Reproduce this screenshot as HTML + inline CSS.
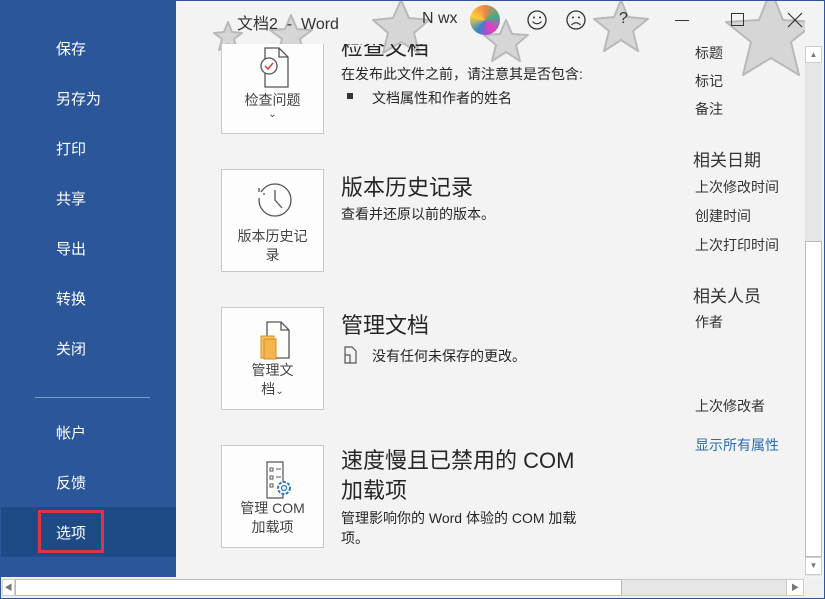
<!DOCTYPE html>
<html><head><meta charset="utf-8"><style>
*{margin:0;padding:0;box-sizing:border-box}
body{width:825px;height:599px;overflow:hidden;background:#f3f3f3;font-family:"Liberation Sans","Noto Sans CJK SC",sans-serif;position:relative;color:#262626}
.side{position:absolute;left:0;top:0;width:176px;height:577px;background:#2b579a}
.side div{position:absolute;left:56px;color:#fff;font-size:15px}
.sel{position:absolute;left:0;top:507px;width:176px;height:50px;background:#1e4a85}
.red{position:absolute;left:38px;top:510px;width:66px;height:43px;border:3px solid #e0353e}
.sep{position:absolute;left:35px;top:397px;width:115px;height:1px;background:#7b9ac6}
.abs{position:absolute}
.box{position:absolute;left:221px;width:103px;background:#fdfdfd;border:1px solid #c8c8c8;text-align:center;font-size:14px;color:#444;line-height:19px}
.h{position:absolute;font-size:22px;color:#262626}
.t{position:absolute;font-size:14px;color:#262626}
.r{position:absolute;left:695px;font-size:14px;color:#333}
.rh{position:absolute;left:693px;font-size:17px;color:#333}
</style></head><body>
<div class="side">
<div style="top:38px">保存</div>
<div style="top:88px">另存为</div>
<div style="top:138px">打印</div>
<div style="top:188px">共享</div>
<div style="top:238px">导出</div>
<div style="top:288px">转换</div>
<div style="top:338px">关闭</div>
<div class="sep" style="left:35px;top:397px"></div>
<div style="top:422px">帐户</div>
<div style="top:472px">反馈</div>
</div>
<div class="sel"></div><div class="red"></div>
<div class="abs" style="left:56px;top:522px;color:#fff;font-size:15px">选项</div>

<!-- title bar stars -->
<svg class="abs" style="left:176px;top:0" width="629" height="90">
<g fill="#d6d6d6" stroke="#b9b9b9" stroke-width="2" stroke-linejoin="round">
<polygon points="52,22 56,32 66,33 58,39 61,50 52,44 43,50 46,39 38,33 48,32"/>
<polygon points="115,15 121,29 136,30 124,39 128,54 115,46 102,54 106,39 94,30 109,29"/>
<polygon points="225,0 233,18 253,20 238,33 243,53 225,42 207,53 212,33 197,20 217,18"/>
<polygon points="330,20 336,34 352,35 340,45 344,61 330,52 316,61 320,45 308,35 324,34"/>
<polygon points="445,0 452,17 472,19 457,31 462,51 445,40 428,51 433,31 418,19 438,17"/>
<polygon points="595,-10 607,20 640,22 615,42 623,75 595,58 567,75 575,42 550,22 583,20"/>
</g></svg>
<div class="abs" style="left:237px;top:10px;font-size:16px;color:#333">文档2 &nbsp;- &nbsp;Word</div>
<div class="abs" style="left:422px;top:10px;font-size:16px;color:#333">N wx</div>
<div class="abs" style="left:470px;top:5px;width:30px;height:30px;border-radius:50%;background:conic-gradient(#e84,#4a8,#e3c,#38c,#fc3,#e84)"></div>
<svg class="abs" style="left:526px;top:9px" width="22" height="22"><circle cx="11" cy="11" r="9" fill="none" stroke="#333" stroke-width="1.3"/><circle cx="8" cy="8.5" r="1" fill="#333"/><circle cx="14" cy="8.5" r="1" fill="#333"/><path d="M6.5 12.5q4.5 4.5 9 0" fill="none" stroke="#333" stroke-width="1.2"/></svg>
<svg class="abs" style="left:565px;top:9px" width="22" height="22"><circle cx="11" cy="11" r="9" fill="none" stroke="#333" stroke-width="1.3"/><circle cx="8" cy="8.5" r="1" fill="#333"/><circle cx="14" cy="8.5" r="1" fill="#333"/><path d="M6.5 16q4.5 -4.5 9 0" fill="none" stroke="#333" stroke-width="1.2"/></svg>
<div class="abs" style="left:619px;top:10px;font-size:16px;color:#333">?</div>
<div class="abs" style="left:675px;top:20px;width:14px;height:1px;background:#333"></div>
<div class="abs" style="left:731px;top:13px;width:13px;height:13px;border:1px solid #333"></div>
<svg class="abs" style="left:787px;top:12px" width="16" height="16"><path d="M1 1L15 15M15 1L1 15" stroke="#333" stroke-width="1.2"/></svg>

<!-- content -->
<div class="box" style="top:44px;height:90px;border-top:none">
<svg width="40" height="46" style="margin-top:2px"><path d="M12 2h14l9 9v30H12z M26 2v9h9" fill="none" stroke="#555" stroke-width="1.3"/><circle cx="16" cy="20" r="8" fill="#fff" stroke="#555" stroke-width="1.3"/><path d="M12 20l3 3 5-6" fill="none" stroke="#d2353e" stroke-width="1.5"/></svg>
<div style="margin-top:-6px">检查问题</div><div style="font-size:10px;line-height:10px">⌄</div></div>
<div class="h" style="left:341px;top:30px;clip-path:inset(14px 0 0 0)">检查文档</div>
<div class="t" style="left:341px;top:64px">在发布此文件之前，请注意其是否包含:</div>
<div class="abs" style="left:347px;top:93px;width:6px;height:6px;background:#333"></div>
<div class="t" style="left:372px;top:88px">文档属性和作者的姓名</div>

<div class="box" style="top:169px;height:103px">
<svg width="44" height="44" style="margin-top:8px"><circle cx="24" cy="22" r="16" fill="none" stroke="#555" stroke-width="1.3"/><path d="M24 12v10l7 8" fill="none" stroke="#555" stroke-width="1.3"/><path d="M8 10v6h6" fill="none" stroke="#555" stroke-width="1.3"/><rect x="6" y="14" width="6" height="6" fill="#fdfdfd"/></svg>
<div>版本历史记<br>录</div></div>
<div class="h" style="left:341px;top:170px">版本历史记录</div>
<div class="t" style="left:341px;top:204px">查看并还原以前的版本。</div>

<div class="box" style="top:307px;height:103px">
<svg width="40" height="44" style="margin-top:10px"><path d="M14 4h14l8 8v28H14z M28 4v8h8" fill="none" stroke="#555" stroke-width="1.3"/><rect x="8" y="18" width="13" height="22" fill="#f5c46a" stroke="#e08a1a"/><rect x="11" y="21" width="12" height="20" fill="#f3b54e" stroke="#e08a1a"/></svg>
<div style="margin-top:-6px">管理文<br>档<span style="font-size:10px">⌄</span></div></div>
<div class="h" style="left:341px;top:308px">管理文档</div>
<svg class="abs" style="left:341px;top:345px" width="18" height="20"><path d="M4 2h7l4 4v12H4z M4 10h5v8" fill="none" stroke="#555" stroke-width="1.2"/></svg>
<div class="t" style="left:372px;top:346px">没有任何未保存的更改。</div>

<div class="box" style="top:445px;height:103px">
<svg width="44" height="44" style="margin-top:12px"><path d="M16 4h16v36H16z" fill="none" stroke="#555" stroke-width="1.2"/><path d="M19 10h3v3h-3zM19 18h3v3h-3zM19 26h3v3h-3zM25 11h5M25 19h5" fill="none" stroke="#555"/><circle cx="33" cy="30" r="6" fill="#fff" stroke="#2a78c8" stroke-width="2" stroke-dasharray="3 1.5"/><circle cx="33" cy="30" r="2.5" fill="none" stroke="#2a78c8" stroke-width="1.3"/></svg>
<div style="margin-top:-8px">管理 COM<br>加载项</div></div>
<div class="h" style="left:341px;top:446px;line-height:30px">速度慢且已禁用的 COM<br>加载项</div>
<div class="t" style="left:341px;top:508px;line-height:20px">管理影响你的 Word 体验的 COM 加载<br>项。</div>

<div class="r" style="top:43px">标题</div>
<div class="r" style="top:71px">标记</div>
<div class="r" style="top:99px">备注</div>
<div class="rh" style="top:146px">相关日期</div>
<div class="r" style="top:177px">上次修改时间</div>
<div class="r" style="top:206px">创建时间</div>
<div class="r" style="top:235px">上次打印时间</div>
<div class="rh" style="top:282px">相关人员</div>
<div class="r" style="top:312px">作者</div>
<div class="r" style="top:396px">上次修改者</div>
<div class="r" style="top:435px;color:#2e6cb0">显示所有属性</div>

<!-- vertical scrollbar -->
<div class="abs" style="left:805px;top:46px;width:17px;height:530px;background:#e6e6e6"></div>
<div class="abs" style="left:805px;top:46px;width:17px;height:17px;background:#fff;border:1px solid #ccc;font-size:8px;color:#777;text-align:center;line-height:15px">▲</div>
<div class="abs" style="left:805px;top:241px;width:17px;height:316px;background:#fff;border:1px solid #bbb"></div>
<div class="abs" style="left:805px;top:557px;width:17px;height:18px;background:#fff;border:1px solid #ccc;font-size:8px;color:#777;text-align:center;line-height:16px">▼</div>
<!-- horizontal scrollbar -->
<div class="abs" style="left:0;top:577px;width:825px;height:22px;background:#f0f0f0"></div>
<div class="abs" style="left:2px;top:579px;width:802px;height:17px;background:#e6e6e6;border:1px solid #ccc"></div>
<div class="abs" style="left:2px;top:579px;width:13px;height:17px;background:#fff;border:1px solid #ccc;font-size:8px;color:#777;line-height:15px;text-align:center">◀</div>
<div class="abs" style="left:15px;top:579px;width:607px;height:17px;background:#fff;border:1px solid #bbb"></div>
<div class="abs" style="left:786px;top:579px;width:18px;height:17px;background:#fff;border:1px solid #ccc;font-size:8px;color:#777;line-height:15px;text-align:center">▶</div>
<div class="abs" style="left:0;top:0;width:825px;height:599px;border:1px solid #2b579a;pointer-events:none"></div>
</body></html>
